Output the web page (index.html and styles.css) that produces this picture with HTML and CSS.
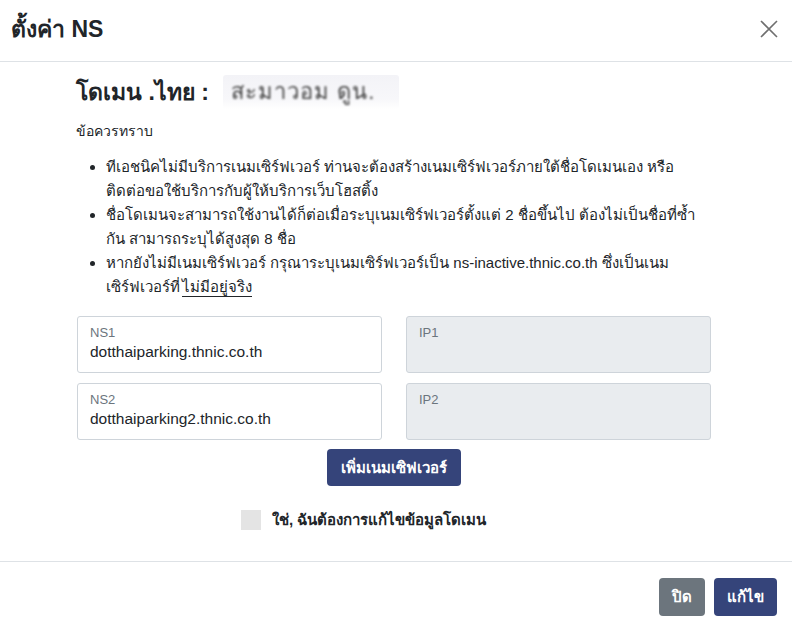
FILE: index.html
```html
<!DOCTYPE html>
<html lang="th">
<head>
<meta charset="utf-8">
<link rel="stylesheet" href="styles.css">
</head>
<body>
<div class="modal">
  <header class="modal-header">
    <h1 class="title">ตั้งค่า NS</h1>
    <button class="close" aria-label="close">
      <svg width="18" height="18" viewBox="0 0 18 18"><path d="M1 1L17 17M17 1L1 17" stroke="#6f6f6f" stroke-width="1.6" fill="none"/></svg>
    </button>
  </header>
  <main class="modal-body">
    <div class="content">
      <h2 class="domain">โดเมน .ไทย : <span class="masked"><span class="masked-text">สะมาวอม ดูน.</span></span></h2>
      <p class="note">ข้อควรทราบ</p>
      <ul class="rules">
        <li>ทีเอชนิคไม่มีบริการเนมเซิร์ฟเวอร์ ท่านจะต้องสร้างเนมเซิร์ฟเวอร์ภายใต้ชื่อโดเมนเอง หรือติดต่อขอใช้บริการกับผู้ให้บริการเว็บโฮสติ้ง</li>
        <li>ชื่อโดเมนจะสามารถใช้งานได้ก็ต่อเมื่อระบุเนมเซิร์ฟเวอร์ตั้งแต่ 2 ชื่อขึ้นไป ต้องไม่เป็นชื่อที่ซ้ำกัน สามารถระบุได้สูงสุด 8 ชื่อ</li>
        <li>หากยังไม่มีเนมเซิร์ฟเวอร์ กรุณาระบุเนมเซิร์ฟเวอร์เป็น ns-inactive.thnic.co.th ซึ่งเป็นเนมเซิร์ฟเวอร์ที่<span class="under">ไม่มีอยู่จริง</span></li>
      </ul>
      <div class="grid">
        <div class="field"><span class="label">NS1</span><span class="value">dotthaiparking.thnic.co.th</span></div>
        <div class="field disabled"><span class="label">IP1</span><span class="value"></span></div>
        <div class="field"><span class="label">NS2</span><span class="value">dotthaiparking2.thnic.co.th</span></div>
        <div class="field disabled"><span class="label">IP2</span><span class="value"></span></div>
      </div>
      <div class="add-row"><button class="btn primary add">เพิ่มเนมเซิฟเวอร์</button></div>
      <label class="confirm"><span class="box"></span><span class="confirm-text">ใช่, ฉันต้องการแก้ไขข้อมูลโดเมน</span></label>
    </div>
  </main>
  <footer class="modal-footer">
    <button class="btn secondary">ปิด</button>
    <button class="btn primary">แก้ไข</button>
  </footer>
</div>
</body>
</html>
```
FILE: styles.css
```css
* { box-sizing: border-box; }
html, body { margin: 0; padding: 0; background: #fff; }
body {
  font-family: "Liberation Sans", Arial, "Noto Sans", sans-serif;
  color: #212529;
  width: 792px;
  height: 631px;
  overflow: hidden;
}
.modal { width: 792px; height: 631px; display: flex; flex-direction: column; }
.modal-header {
  height: 62px;
  border-bottom: 1px solid #dee2e6;
  display: flex;
  align-items: center;
  justify-content: space-between;
  padding: 0 14px 4px 11px;
}
.title { margin: 0; font-size: 23px; font-weight: 600; color: #212529; }
.close { border: 0; background: none; padding: 0; width: 18px; height: 18px; display: flex; }
.modal-body { flex: 1; }
.content { padding: 13px 0 0 76px; width: 712px; }
.domain {
  margin: 0;
  font-size: 23px;
  font-weight: 600;
  height: 34px;
  display: flex;
  align-items: center;
  white-space: pre;
}
.masked {
  display: inline-block;
  height: 34px;
  width: 176px;
  margin-left: 8px;
  background: linear-gradient(180deg, #f3f3f7 0%, #f7f7fa 70%, #ffffff 100%);
  border-radius: 3px;
  overflow: hidden;
  padding-left: 8px;
}
.masked-text {
  display: inline-block;
  font-size: 22px;
  line-height: 34px;
  font-weight: 400;
  color: #444;
  filter: blur(1px);
  letter-spacing: 1px;
}
.note { margin: 12px 0 0; font-size: 14px; line-height: 20px; }
.rules {
  margin: 14px 0 0;
  padding: 0 0 0 30px;
  font-size: 15px;
  line-height: 24px;
  width: 630px;
  color: #212529;
}
.under { border-bottom: 1px solid #212529; line-height: 18px; display: inline-block; margin-left: 2px; }
.grid {
  margin-top: 17px;
  display: grid;
  grid-template-columns: 305px 305px;
  column-gap: 24px;
  row-gap: 10px;
  margin-left: 1px;
}
.field {
  height: 57px;
  border: 1px solid #ced4da;
  border-radius: 3px;
  background: #fff;
  padding: 7px 12px 0;
  display: flex;
  flex-direction: column;
}
.field.disabled { background: #e9ecef; }
.label { font-size: 13px; line-height: 18px; color: #6c757d; }
.value { font-size: 15.5px; line-height: 20px; color: #212529; }
.add-row { display: flex; justify-content: center; margin-top: 9px; }
.btn {
  border: 0;
  border-radius: 4px;
  color: #fff;
  font-family: inherit;
  font-size: 15px;
  font-weight: 600;
  height: 37px;
  padding: 0 13px;
}
.primary { background: #35447a; }
.secondary { background: #6c757d; }
.add { width: 134px; }
.confirm { display: flex; align-items: center; margin: 22px 0 0 165px; gap: 11px; }
.box { width: 20px; height: 20px; background: #e4e4e4; }
.confirm-text { font-size: 15px; font-weight: 600; }
.modal-footer {
  height: 70px;
  border-top: 1px solid #dee2e6;
  display: flex;
  justify-content: flex-end;
  gap: 9px;
  padding: 16px 15px 0 0;
}
.modal-footer .btn { height: 38px; }
.modal-footer .secondary { width: 46px; padding: 0; }
.modal-footer .primary { width: 63px; padding: 0; }
```
